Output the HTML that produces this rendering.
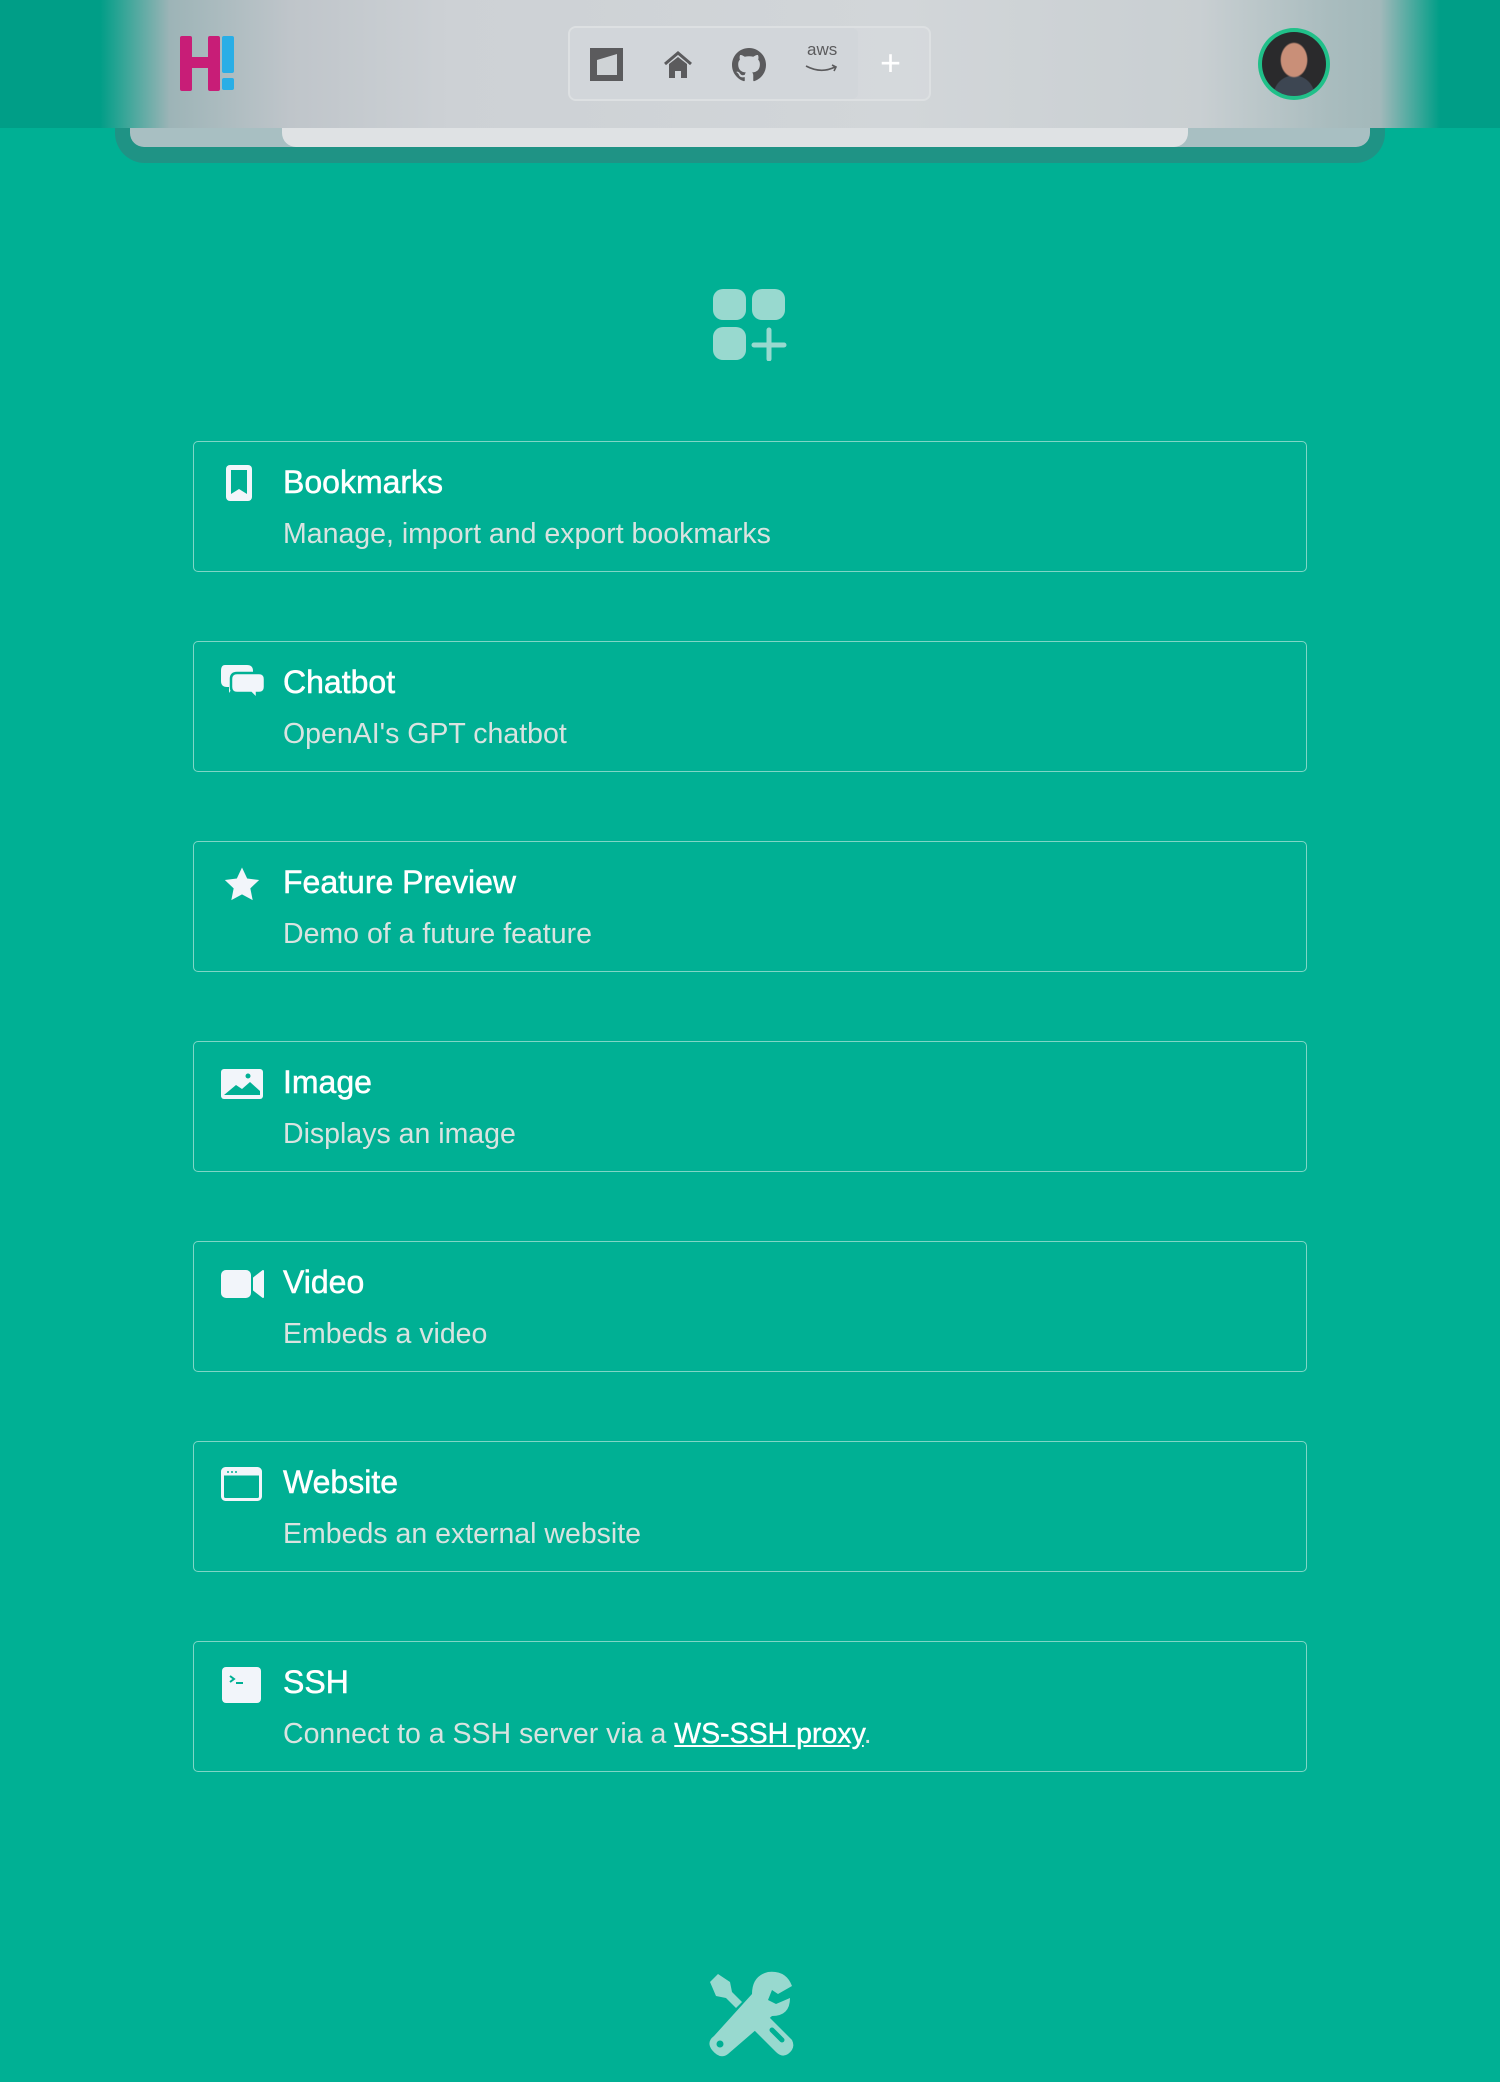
<!DOCTYPE html>
<html><head><meta charset="utf-8"><style>
*{margin:0;padding:0;box-sizing:border-box}
body{width:1500px;height:2082px;overflow:hidden;background:#00b094;font-family:"Liberation Sans",sans-serif;position:relative}
.hdr{position:absolute;left:0;top:0;width:1500px;height:128px;background:linear-gradient(90deg,#009e87 0,#009e87 100px,#9db4b7 170px,#bfc5ca 290px,#cdd1d5 450px,#d2d6d9 900px,#c9cfd2 1200px,#a9bcbe 1330px,#a2b8ba 1380px,#009e87 1440px,#009e87 100%)}
.frame{position:absolute;left:115px;top:110px;width:1270px;height:53px;background:#1f9385;border-radius:0 0 30px 30px}
.frame .in{position:absolute;left:15px;top:18px;width:1240px;height:19px;background:#a8bfc2;border-radius:0 0 14px 14px}
.frame .in2{position:absolute;left:167px;top:18px;width:906px;height:19px;background:#dfe2e4;border-radius:0 0 14px 14px}
.nav{position:absolute;left:568px;top:26px;width:363px;height:75px;border:2px solid #dde0e2;border-radius:8px;background:rgba(215,219,222,.6)}
.nav .sel{position:absolute;left:0;top:0;width:288px;height:71px;background:rgba(210,214,217,.9);border-radius:6px}
.card{position:absolute;left:193px;width:1114px;height:131px;border:1.5px solid #7fd6c6;border-radius:5px}
.card svg{position:absolute;left:27px;top:23px}
.card .t{position:absolute;left:89px;top:22px;font-size:32px;color:#fff;-webkit-text-stroke:0.5px #fff}
.card .d{position:absolute;left:89px;top:76px;font-size:28.5px;color:#d9e3e0}
.card .d a{color:#fff;text-decoration:underline;-webkit-text-stroke:0.4px #fff}
</style></head><body>
<div class="frame"><div class="in"></div><div class="in2"></div></div>
<div class="hdr">
 <div style="position:absolute;left:180px;top:36px;width:12px;height:55px;background:#c81d77;border-radius:2px"></div>
 <div style="position:absolute;left:208px;top:36px;width:12px;height:55px;background:#c81d77;border-radius:2px"></div>
 <div style="position:absolute;left:180px;top:57px;width:40px;height:11px;background:#c81d77"></div>
 <div style="position:absolute;left:222px;top:36px;width:12px;height:37px;background:#29aee6;border-radius:2px"></div>
 <div style="position:absolute;left:222px;top:78px;width:12px;height:12px;background:#29aee6;border-radius:2px"></div>
 <div class="nav"><div class="sel"></div>
  <svg style="position:absolute;left:20px;top:20px" width="34" height="34" viewBox="0 0 34 34"><rect width="33" height="33" fill="#5b5b5d"/><path d="M7 27V12L27 6V27Z" fill="#cfd3d6"/></svg>
  <svg style="position:absolute;left:93px;top:22px" width="30" height="30" viewBox="0 0 30 30"><path d="M2 14L15 3 28 14" stroke="#5b5b5d" stroke-width="3" fill="none"/><path d="M6 14L15 7 24 14V28H18V21H12V28H6Z" fill="#5b5b5d"/></svg>
  <svg style="position:absolute;left:162px;top:20px" width="34" height="34" viewBox="0 0 16 16"><path fill="#5b5b5d" d="M8 0C3.58 0 0 3.580 0 8c0 3.54 2.29 6.53 5.47 7.59.4.07.55-.17.55-.38 0-.19-.01-.82-.01-1.490-2.010.37-2.53-.49-2.69-.94-.09-.23-.48-.94-.82-1.13-.28-.15-.68-.52-.01-.53.63-.01 1.08.58 1.23.82.72 1.21 1.870.87 2.330.66.07-.52.28-.87.51-1.07-1.78-.2-3.64-.89-3.64-3.95 0-.87.31-1.59.82-2.15-.08-.2-.36-1.020.08-2.12 0 0 .67-.21 2.2.82.64-.18 1.32-.27 2-.27.68 0 1.36.09 2 .27 1.53-1.04 2.2-.82 2.2-.82.44 1.1.16 1.92.08 2.12.51.56.82 1.27.82 2.15 0 3.07-1.87 3.75-3.65 3.95.29.25.54.73.54 1.48 0 1.07-.01 1.93-.01 2.2 0 .21.15.46.55.38A8.013 8.013 0 0016 8c0-4.42-3.58-8-8-8z"/></svg>
  <div style="position:absolute;left:237px;top:12px;font-size:17px;color:#5b5b5d">aws</div>
  <svg style="position:absolute;left:235px;top:36px" width="34" height="10" viewBox="0 0 34 10"><path d="M1 2Q16 10 30 3M27 1L31 3 29 7" stroke="#5b5b5d" stroke-width="1.6" fill="none"/></svg>
  <div style="position:absolute;left:310px;top:14px;font-size:36px;color:#fff;font-weight:300">+</div>
 </div>
 <div style="position:absolute;left:1258px;top:28px;width:72px;height:72px;border-radius:50%;background:#20c089;padding:4px"><div style="width:64px;height:64px;border-radius:50%;background:radial-gradient(ellipse 14px 18px at 32px 28px,#c98f78 90%,transparent 100%),radial-gradient(circle at 32px 64px,#3d4652 20px,transparent 21px),#2a2a2c"></div></div>
</div>

<svg style="position:absolute;left:713px;top:289px" width="74" height="72" viewBox="0 0 74 72"><rect x="0" y="0" width="33" height="31" rx="10" fill="#98d9cf"/><rect x="39" y="0" width="33" height="31" rx="10" fill="#98d9cf"/><rect x="0" y="38" width="33" height="33" rx="10" fill="#98d9cf"/><path d="M56 41V70M41 56H71" stroke="#98d9cf" stroke-width="5" stroke-linecap="round"/></svg>

<div class="card" style="top:441px"><svg width="36" height="36" viewBox="0 0 36 36"><rect x="5" y="0" width="26" height="36" rx="4" fill="#f2f5fa"/><path d="M10 5H26V29L18 24 10 29Z" fill="#00b094"/></svg><div class="t">Bookmarks</div><div class="d">Manage, import and export bookmarks</div></div>
<div class="card" style="top:641px"><svg width="44" height="40" viewBox="0 0 44 40"><path d="M4 0H26Q32 0 32 6V16Q32 22 26 22H12L8 28V22H6Q0 22 0 16V6Q0 0 4 0Z" fill="#f2f5fa"/><path d="M16 8H38Q44 8 44 14V22Q44 28 38 28H36V34L30 28H16Q10 28 10 22V14Q10 8 16 8Z" fill="#f2f5fa" stroke="#00b094" stroke-width="2.5"/></svg><div class="t">Chatbot</div><div class="d">OpenAI's GPT chatbot</div></div>
<div class="card" style="top:841px"><svg width="42" height="40" viewBox="0 0 24 24"><path fill="#f2f5fa" d="M12 1.5l3.1 6.6 7.2.9-5.3 5 1.4 7.1L12 17.6 5.6 21.1 7 14l-5.3-5 7.2-.9z"/></svg><div class="t">Feature Preview</div><div class="d">Demo of a future feature</div></div>
<div class="card" style="top:1041px"><svg width="42" height="40" viewBox="0 0 42 40"><rect x="0" y="4" width="42" height="30" rx="3" fill="#f2f5fa"/><path d="M3 30L15 20 21 24 29 17 39 26V30Z" fill="#00b094"/><circle cx="27" cy="11" r="2.5" fill="#00b094"/></svg><div class="t">Image</div><div class="d">Displays an image</div></div>
<div class="card" style="top:1241px"><svg width="44" height="40" viewBox="0 0 44 40"><rect x="0" y="5" width="30" height="28" rx="5" fill="#f2f5fa"/><path d="M33 13L42 6V32L33 25Z" fill="#f2f5fa" stroke="#f2f5fa" stroke-width="2" stroke-linejoin="round"/></svg><div class="t">Video</div><div class="d">Embeds a video</div></div>
<div class="card" style="top:1441px"><svg width="42" height="40" viewBox="0 0 42 40"><rect x="1.5" y="3.5" width="38" height="31" rx="3" fill="none" stroke="#f2f5fa" stroke-width="3"/><rect x="1.5" y="3.5" width="38" height="7" fill="#f2f5fa"/><circle cx="7" cy="7" r="1" fill="#00b094"/><circle cx="11" cy="7" r="1" fill="#00b094"/><circle cx="15" cy="7" r="1" fill="#00b094"/></svg><div class="t">Website</div><div class="d">Embeds an external website</div></div>
<div class="card" style="top:1641px"><svg width="42" height="40" viewBox="0 0 42 40"><rect x="1" y="2" width="39" height="36" rx="4" fill="#f2f5fa"/><path d="M9 11L13 14 9 17M15 18H22" stroke="#00b094" stroke-width="2" fill="none"/></svg><div class="t">SSH</div><div class="d">Connect to a SSH server via a <a>WS-SSH proxy</a>.</div></div>

<svg style="position:absolute;left:706px;top:1970px" width="88" height="88" viewBox="0 0 88 88"><g fill="#98d9cf"><path d="M4 12L12 4 24 12 26 22 36 32 30 38 20 28 10 26Z"/><path d="M62 2Q80 0 86 16L72 24 66 20 62 30 70 34 84 28Q84 46 66 46L22 84Q14 90 6 80Q0 72 8 66L46 24Q46 6 62 2Z"/><circle cx="14" cy="74" r="3.5" fill="#00b094"/><path d="M56 52L62 46 86 70Q90 78 82 84Q76 88 70 82L48 60Z"/><path d="M66 60L76 70" stroke="#00b094" stroke-width="5" stroke-linecap="round"/></g></svg>
</body></html>
